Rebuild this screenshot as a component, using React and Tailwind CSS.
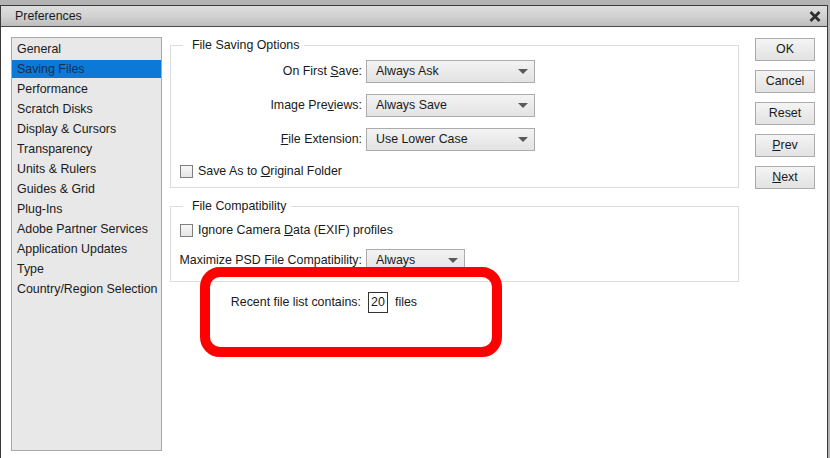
import React from "react";

const sections = [
  "General",
  "Saving Files",
  "Performance",
  "Scratch Disks",
  "Display & Cursors",
  "Transparency",
  "Units & Rulers",
  "Guides & Grid",
  "Plug-Ins",
  "Adobe Partner Services",
  "Application Updates",
  "Type",
  "Country/Region Selection",
];

function Select({ value, width }) {
  return (
    <div
      className={`${width} h-[23px] ml-[4px] border border-[#acacac] bg-gradient-to-b from-[#f3f3f3] to-[#e3e3e3] flex items-center justify-between pl-[9px] pr-[6px]`}
    >
      <span>{value}</span>
      <span className="w-0 h-0 border-x-[5px] border-x-transparent border-t-[5px] border-t-[#5a5a5a]"></span>
    </div>
  );
}

function Check({ children }) {
  return (
    <div className="h-[14px] flex items-center pl-[9px]">
      <span className="w-[13px] h-[13px] border border-[#7f7f7f] bg-gradient-to-b from-[#f6f6f6] to-[#e6e6e6]"></span>
      <span className="ml-[5px]">{children}</span>
    </div>
  );
}

function Button({ children, first }) {
  return (
    <div
      className={`w-[60px] h-[23px] ${first ? "" : "mt-[9px]"} border border-[#acacac] bg-gradient-to-b from-[#f4f4f4] to-[#e2e2e2] flex items-center justify-center`}
    >
      {children}
    </div>
  );
}

export default function App() {
  return (
    <div className="w-[830px] h-[458px] overflow-hidden bg-[#b3b3b3] pt-[5px] font-['Liberation_Sans',Arial,sans-serif] text-[12.4px] text-[#1a1a1a]">
      <div className="w-[828px] h-[460px] border-x border-t border-[#3a3a3a] bg-white flex flex-col">
        {/* title bar */}
        <div className="h-[21px] shrink-0 border-b border-[#4a4a4a] bg-gradient-to-b from-[#dedede] via-[#d2d2d2] to-[#bdbdbd] flex items-center justify-between pl-[14px] pr-[6px]">
          <span>Preferences</span>
          <svg width="12" height="11" viewBox="0 0 12 11">
            <path d="M1.5 1 L10.5 10 M10.5 1 L1.5 10" stroke="#2e2e2e" strokeWidth="2.8" />
          </svg>
        </div>

        <div className="flex flex-1 min-h-0">
          {/* sidebar */}
          <div className="ml-[10px] mt-[10px] w-[151px] h-[414px] border border-[#a9a9a9] bg-[#e8e8e8] pt-[1px]">
            {sections.map((s) =>
              s === "Saving Files" ? (
                <div key={s} className="h-[20px] py-[1px]">
                  <div className="h-[18px] bg-[#0c79d8] text-[#13304f] flex items-center pl-[5px]">{s}</div>
                </div>
              ) : (
                <div key={s} className="h-[20px] flex items-center pl-[5px]">
                  {s}
                </div>
              )
            )}
          </div>

          {/* main panel */}
          <div className="relative ml-[8px] w-[569px]">
            <fieldset className="mt-[10px] border border-[#dcdcdc] pb-[9px]">
              <legend className="ml-[12px] pl-[9px] pr-[5px] leading-[16px]">File Saving Options</legend>
              <div className="mt-[7px] flex items-center">
                <span className="w-[191px] text-right">
                  On First <u>S</u>ave:
                </span>
                <Select value="Always Ask" width="w-[169px]" />
              </div>
              <div className="mt-[11px] flex items-center">
                <span className="w-[191px] text-right">
                  Image Pre<u>v</u>iews:
                </span>
                <Select value="Always Save" width="w-[169px]" />
              </div>
              <div className="mt-[11px] flex items-center">
                <span className="w-[191px] text-right">
                  <u>F</u>ile Extension:
                </span>
                <Select value="Use Lower Case" width="w-[169px]" />
              </div>
              <div className="mt-[13px]">
                <Check>
                  Save As to <u>O</u>riginal Folder
                </Check>
              </div>
            </fieldset>

            <fieldset className="mt-[10px] border border-[#dcdcdc] pb-[9px]">
              <legend className="ml-[12px] pl-[9px] pr-[5px] leading-[16px]">File Compatibility</legend>
              <div className="mt-[9px]">
                <Check>
                  Ignore Camera <u>D</u>ata (EXIF) profiles
                </Check>
              </div>
              <div className="mt-[12px] flex items-center">
                <span className="w-[191px] text-right">Maximize PSD File Compatibility:</span>
                <Select value="Always" width="w-[99px]" />
              </div>
            </fieldset>

            <div className="mt-[10px] flex items-center">
              <span className="w-[191px] text-right">Recent file list contains:</span>
              <span className="ml-[7px] w-[20px] h-[21px] border border-[#333] flex items-center justify-center">20</span>
              <span className="ml-[7px]">files</span>
            </div>

            {/* annotation */}
            <div className="absolute left-[30px] top-[240px] w-[302px] h-[90px] border-[10px] border-[#ff0000] rounded-[20px]"></div>
          </div>

          {/* buttons */}
          <div className="ml-[16px] mt-[11px]">
            <Button first>OK</Button>
            <Button>Cancel</Button>
            <Button>Reset</Button>
            <Button>
              <span>
                <u>P</u>rev
              </span>
            </Button>
            <Button>
              <span>
                <u>N</u>ext
              </span>
            </Button>
          </div>
        </div>
      </div>
    </div>
  );
}
